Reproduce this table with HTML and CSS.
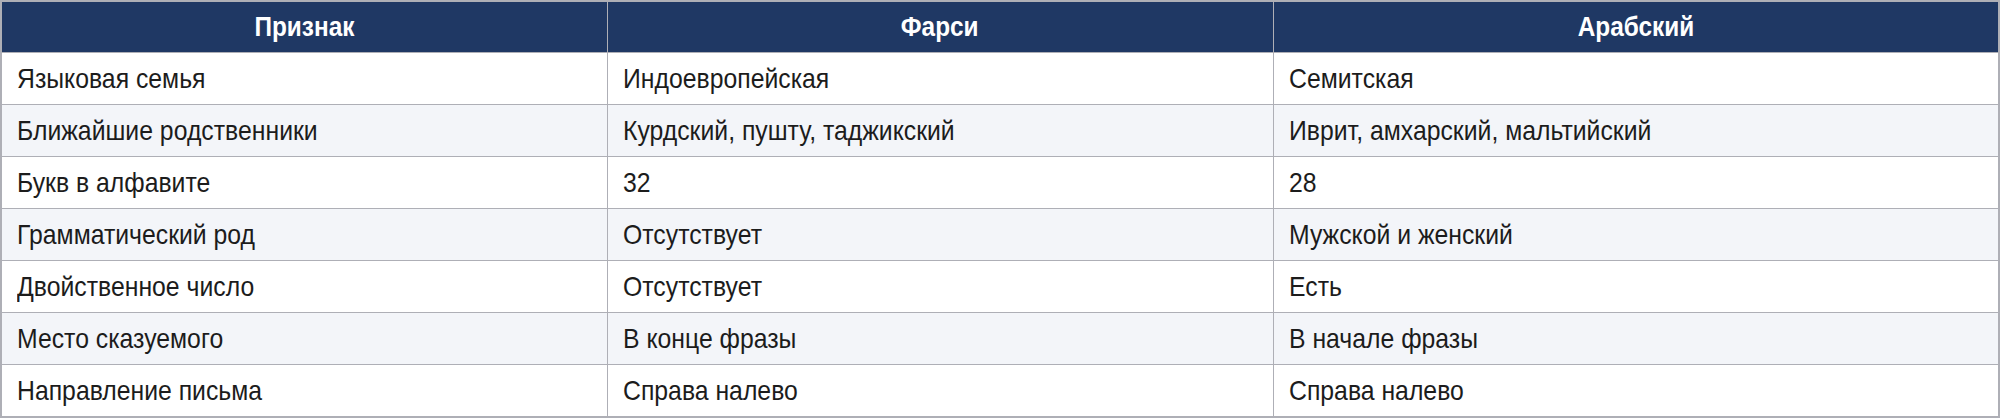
FILE: index.html
```html
<!DOCTYPE html>
<html lang="ru">
<head>
<meta charset="utf-8">
<link rel="stylesheet" href="styles.css">
</head>
<body>
<table class="cmp">
  <colgroup>
    <col class="c1">
    <col class="c2">
    <col class="c3">
  </colgroup>
  <thead>
    <tr><th><span class="t">Признак</span></th><th><span class="t">Фарси</span></th><th><span class="t">Арабский</span></th></tr>
  </thead>
  <tbody>
    <tr><td><span class="t">Языковая семья</span></td><td><span class="t">Индоевропейская</span></td><td><span class="t">Семитская</span></td></tr>
    <tr><td><span class="t">Ближайшие родственники</span></td><td><span class="t">Курдский, пушту, таджикский</span></td><td><span class="t">Иврит, амхарский, мальтийский</span></td></tr>
    <tr><td><span class="t">Букв в алфавите</span></td><td><span class="t">32</span></td><td><span class="t">28</span></td></tr>
    <tr><td><span class="t">Грамматический род</span></td><td><span class="t">Отсутствует</span></td><td><span class="t">Мужской и женский</span></td></tr>
    <tr><td><span class="t">Двойственное число</span></td><td><span class="t">Отсутствует</span></td><td><span class="t">Есть</span></td></tr>
    <tr><td><span class="t">Место сказуемого</span></td><td><span class="t">В конце фразы</span></td><td><span class="t">В начале фразы</span></td></tr>
    <tr><td><span class="t">Направление письма</span></td><td><span class="t">Справа налево</span></td><td><span class="t">Справа налево</span></td></tr>
  </tbody>
</table>
</body>
</html>
```

FILE: styles.css
```css
html, body {
  margin: 0;
  padding: 0;
  background: #ffffff;
}

.cmp {
  width: 2000px;
  border-collapse: collapse;
  table-layout: fixed;
  border: 2px solid #aeafb6;
  font-family: "Liberation Sans", Arial, sans-serif;
  font-size: 28px;
  color: #1c1c1c;
}

.c1 { width: 606px; }
.c2 { width: 666px; }

.t {
  display: inline-block;
  white-space: nowrap;
  transform: scaleX(0.885);
  transform-origin: left center;
}

.cmp th {
  background: #1f3864;
  color: #ffffff;
  font-weight: bold;
  text-align: center;
  height: 50px;
  padding: 0 16px;
  border: 1px solid #aeafb6;
  border-top: 2px solid #aeafb6;
}

.cmp th .t {
  transform: scaleX(0.87);
  transform-origin: center center;
}

.cmp td {
  height: 51px;
  padding: 0 15px;
  border: 1px solid #aeafb6;
  text-align: left;
  vertical-align: middle;
}

.cmp tbody tr:nth-child(even) td {
  background: #f3f5f9;
}
```
